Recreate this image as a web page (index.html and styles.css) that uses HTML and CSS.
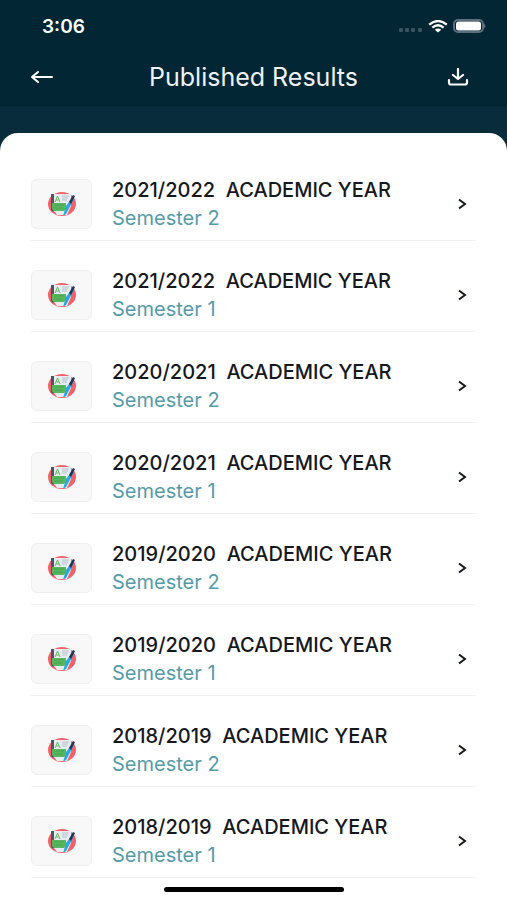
FILE: index.html
```html
<!DOCTYPE html>
<html lang="en">
<head>
    <meta charset="UTF-8">
    <meta name="viewport" content="width=device-width, initial-scale=1.0">
    <title>Published Results</title>
    <link rel="stylesheet" href="styles.css">
</head>
<body>
    <!-- Shared icons -->
    <svg class="icon-defs" aria-hidden="true">
        <symbol id="icon-result" viewBox="0 0 30 26">
            <ellipse cx="15" cy="13" rx="14" ry="12" fill="#f4616a"/>
            <path d="M7 3h17v12l-4 9H10l-3-4z" fill="#e6ecef"/>
            <path d="M4 3h3v16l-1 2-2-2z" fill="#4b5563"/>
            <path d="M8 11l2.500-6 2.500 6M9 9h3" fill="none" stroke="#66bb6a"/>
            <path d="M15 5h7M15 7h6M15 9h5" stroke="#b8c2cc"/>
            <path d="M5 12h14v6l-2 2H7l-2-2z" fill="#58b75c"/>
            <path d="M7 14h10M7 17h9" stroke="#45a552"/>
            <path d="M19 15l6-8 2 1-8 15-3 2z" fill="#29a8e0"/>
            <path d="M22 11l4-7 2 1-4 8z" fill="#1d3557"/>
        </symbol>
        <symbol id="icon-chevron" viewBox="0 0 10 12">
            <path d="M2 1.500l6 4.500-6 4.500" fill="none" stroke="#15181d" stroke-width="2"/>
        </symbol>
    </svg>

    <header class="top">
        <div class="status-bar">
            <span class="time">3:06</span>
            <div class="status-icons">
                <svg width="24" height="4" viewBox="0 0 24 4" fill="#38535f" aria-hidden="true">
                    <rect x="0" width="4" height="4" rx="1"/>
                    <rect x="6" width="4" height="4" rx="1"/>
                    <rect x="12" width="4" height="4" rx="1"/>
                    <rect x="19" width="4" height="4" rx="1"/>
                </svg>
                <svg class="wifi" width="20" height="13" viewBox="0 0 20 13" fill="none" stroke="#fff" stroke-width="2.4" aria-hidden="true">
                    <path d="M1.2 4.6Q10-2.4 18.8 4.6"/>
                    <path d="M4.4 7.6Q10 2.8 15.6 7.6"/>
                    <path d="M6.8 9.8Q10 7 13.2 9.8L10 12.6z" fill="#fff" stroke="none"/>
                </svg>
                <svg width="34" height="14" viewBox="0 0 34 14" aria-hidden="true">
                    <rect x="1" y="1" width="29" height="12" rx="4" fill="none" stroke="#5b707a" stroke-width="2"/>
                    <rect x="3" y="2.5" width="25" height="9" rx="2.5" fill="#fff"/>
                    <path d="M31 4.5q3 2.5 0 5z" fill="#5b707a"/>
                </svg>
            </div>
        </div>
        <div class="nav-bar">
            <button class="nav-btn" aria-label="Back">
                <svg width="24" height="14" viewBox="0 0 24 14" fill="none" stroke="#fff" stroke-width="2" stroke-linecap="round" stroke-linejoin="round">
                    <path d="M22 7H2M8 2L2 7l6 5"/>
                </svg>
            </button>
            <h1>Published Results</h1>
            <button class="nav-btn" aria-label="Download">
                <svg width="22" height="18" viewBox="0 0 22 18" fill="none" stroke="#fff" stroke-width="2.2" stroke-linecap="round" stroke-linejoin="round">
                    <path d="M11 1v10M6 7l5 4 5-4"/>
                    <path d="M2 12v2.500q0 2 2 2h14q2 0 2-2V12"/>
                </svg>
            </button>
        </div>
    </header>

    <main class="sheet">
        <ul class="results">
            <li>
                <a class="result" href="#">
                    <span class="thumb"><svg><use href="#icon-result"/></svg></span>
                    <span class="info">
                        <span class="year">2021/2022&nbsp; ACADEMIC YEAR</span>
                        <span class="semester">Semester 2</span>
                    </span>
                    <svg class="chevron"><use href="#icon-chevron"/></svg>
                </a>
            </li>
            <li>
                <a class="result" href="#">
                    <span class="thumb"><svg><use href="#icon-result"/></svg></span>
                    <span class="info">
                        <span class="year">2021/2022&nbsp; ACADEMIC YEAR</span>
                        <span class="semester">Semester 1</span>
                    </span>
                    <svg class="chevron"><use href="#icon-chevron"/></svg>
                </a>
            </li>
            <li>
                <a class="result" href="#">
                    <span class="thumb"><svg><use href="#icon-result"/></svg></span>
                    <span class="info">
                        <span class="year">2020/2021&nbsp; ACADEMIC YEAR</span>
                        <span class="semester">Semester 2</span>
                    </span>
                    <svg class="chevron"><use href="#icon-chevron"/></svg>
                </a>
            </li>
            <li>
                <a class="result" href="#">
                    <span class="thumb"><svg><use href="#icon-result"/></svg></span>
                    <span class="info">
                        <span class="year">2020/2021&nbsp; ACADEMIC YEAR</span>
                        <span class="semester">Semester 1</span>
                    </span>
                    <svg class="chevron"><use href="#icon-chevron"/></svg>
                </a>
            </li>
            <li>
                <a class="result" href="#">
                    <span class="thumb"><svg><use href="#icon-result"/></svg></span>
                    <span class="info">
                        <span class="year">2019/2020&nbsp; ACADEMIC YEAR</span>
                        <span class="semester">Semester 2</span>
                    </span>
                    <svg class="chevron"><use href="#icon-chevron"/></svg>
                </a>
            </li>
            <li>
                <a class="result" href="#">
                    <span class="thumb"><svg><use href="#icon-result"/></svg></span>
                    <span class="info">
                        <span class="year">2019/2020&nbsp; ACADEMIC YEAR</span>
                        <span class="semester">Semester 1</span>
                    </span>
                    <svg class="chevron"><use href="#icon-chevron"/></svg>
                </a>
            </li>
            <li>
                <a class="result" href="#">
                    <span class="thumb"><svg><use href="#icon-result"/></svg></span>
                    <span class="info">
                        <span class="year">2018/2019&nbsp; ACADEMIC YEAR</span>
                        <span class="semester">Semester 2</span>
                    </span>
                    <svg class="chevron"><use href="#icon-chevron"/></svg>
                </a>
            </li>
            <li>
                <a class="result" href="#">
                    <span class="thumb"><svg><use href="#icon-result"/></svg></span>
                    <span class="info">
                        <span class="year">2018/2019&nbsp; ACADEMIC YEAR</span>
                        <span class="semester">Semester 1</span>
                    </span>
                    <svg class="chevron"><use href="#icon-chevron"/></svg>
                </a>
            </li>
        </ul>
        <div class="home-indicator"></div>
    </main>
</body>
</html>
```

FILE: styles.css
```css
* {
    box-sizing: border-box;
}
body {
    font-family: Inter, "Open Sans", sans-serif;
    background-color: #082c3b;
    margin: 0;
    min-height: 100vh;
    display: flex;
    flex-direction: column;
}
.icon-defs {
    display: none;
}
.top {
    background-color: #022634;
    color: #fff;
}
.status-bar {
    display: flex;
    justify-content: space-between;
    align-items: center;
    height: 52px;
    padding: 0 20px 0 42px;
}
.time {
    font-size: 19px;
    font-weight: 600;
}
.status-icons {
    display: flex;
    align-items: center;
    gap: 5px;
}
.status-icons svg:first-child {
    margin-top: 8px;
}
.nav-bar {
    display: flex;
    justify-content: space-between;
    align-items: center;
    height: 54px;
    padding: 0 30px 4px;
}
.nav-bar h1 {
    margin: 0;
    font-size: 25px;
    line-height: 28px;
    font-weight: 400;
    color: #eef2f4;
}
.nav-btn {
    display: flex;
    padding: 0;
    border: none;
    background: none;
    cursor: pointer;
}
.nav-btn:first-child {
    padding-right: 6px;
}
.nav-btn:last-child {
    padding-right: 8px;
}
.sheet {
    flex: 1;
    margin-top: 27px;
    padding-top: 17px;
    background-color: #fff;
    border-radius: 18px 18px 0 0;
}
.results {
    list-style: none;
    margin: 0;
    padding: 0 31px;
}
.result {
    display: flex;
    align-items: center;
    gap: 20px;
    padding: 26px 9px 8px 0;
    border-bottom: 1px solid #f1f1f1;
    text-decoration: none;
}
.thumb {
    display: flex;
    align-items: center;
    justify-content: center;
    width: 61px;
    height: 50px;
    background-color: #f8f8f8;
    border: 1px solid #efefef;
    border-radius: 6px;
}
.thumb svg {
    width: 30px;
    height: 26px;
}
.info {
    flex: 1;
    display: flex;
    flex-direction: column;
}
.year {
    font-size: 20px;
    line-height: 28px;
    font-weight: 500;
    color: #15181d;
}
.semester {
    font-size: 20px;
    line-height: 28px;
    color: #559ba7;
}
.chevron {
    width: 10px;
    height: 12px;
}
.home-indicator {
    width: 180px;
    height: 5px;
    margin: 9px auto 8px;
    border-radius: 3px;
    background-color: #000;
}
```
